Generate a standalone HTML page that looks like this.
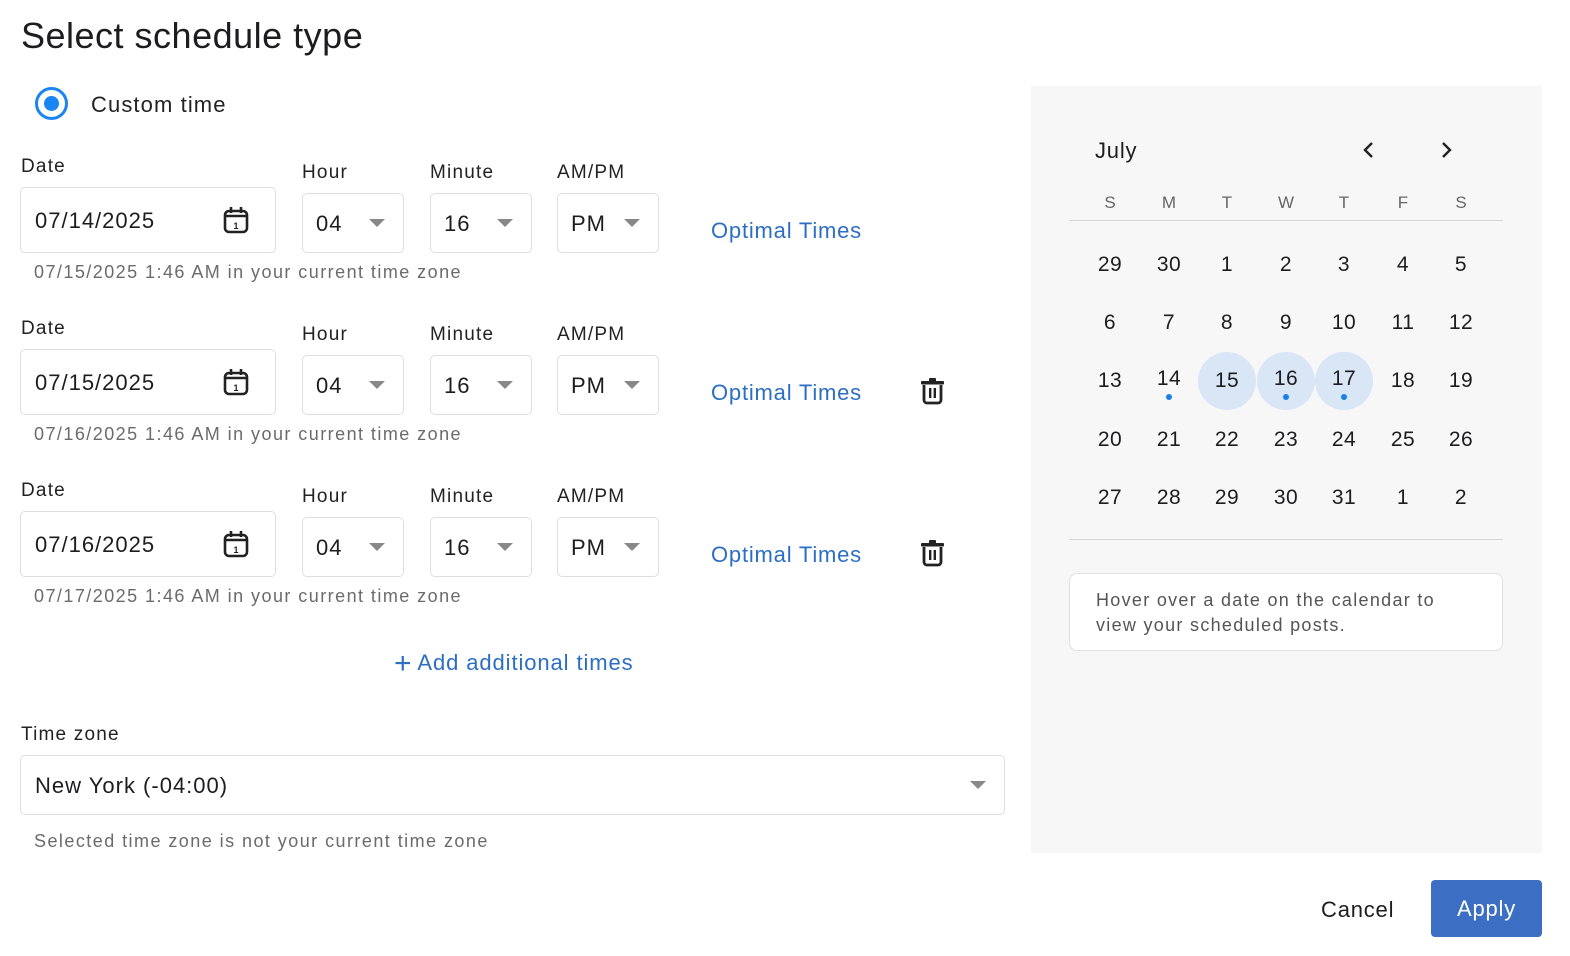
<!DOCTYPE html>
<html><head><style>
*{box-sizing:border-box;margin:0;padding:0}
body{width:1570px;height:956px;background:#fff;font-family:"Liberation Sans",sans-serif;color:#1d1d1f;position:relative;overflow:hidden}
.a{position:absolute}
.lbl{font-size:19px;color:#222;letter-spacing:1.2px}
.box{border:1px solid #dedede;border-radius:5px;background:#fff}
.val{font-size:22px;color:#1d1d1f;letter-spacing:1px}
.help{font-size:18px;color:#6b6b6b;letter-spacing:1.45px}
.opt{font-size:22px;color:#2c6ec2;letter-spacing:.8px}
.caret{width:0;height:0;border-left:8px solid transparent;border-right:8px solid transparent;border-top:8px solid #888}
.cal{position:absolute;left:1031px;top:86px;width:511px;height:767px;background:#f7f7f7}
.d{position:absolute;width:58px;height:58px;margin-left:-29px;margin-top:-29px;text-align:center;line-height:58px;font-size:21px;color:#1d1d1f;border-radius:50%;letter-spacing:.5px}
.hd{position:absolute;width:40px;margin-left:-20px;text-align:center;font-size:17px;color:#666}
.sel{background:#d9e6f5}
.dot{position:absolute;left:26px;top:42px;width:6px;height:6px;border-radius:50%;background:#1a7fe8}
</style></head><body>
<div class="a" style="left:21px;top:15px;font-size:36px;color:#1d1d1f;letter-spacing:.5px">Select schedule type</div>
<div class="a" style="left:35px;top:87px;width:33px;height:33px;border-radius:50%;border:3px solid #1a84f0"></div>
<div class="a" style="left:44px;top:96px;width:15px;height:15px;border-radius:50%;background:#1a84f0"></div>
<div class="a" style="left:91px;top:92px;font-size:22px;color:#222;letter-spacing:1.1px">Custom time</div>

<div id="rows"></div>
<script>
var dates=["07/14/2025","07/15/2025","07/16/2025"],helps=["07/15/2025 1:46 AM in your current time zone","07/16/2025 1:46 AM in your current time zone","07/17/2025 1:46 AM in your current time zone"];
var h="";
for(var i=0;i<3;i++){var o=i*162;
h+='<div class="a lbl" style="left:21px;top:'+(156+o)+'px">Date</div>';
h+='<div class="a box" style="left:20px;top:'+(187+o)+'px;width:256px;height:66px"></div>';
h+='<div class="a val" style="left:35px;top:'+(208+o)+'px">'+dates[i]+'</div>';
h+='<svg class="a" style="left:222px;top:'+(205+o)+'px" width="28" height="30" viewBox="0 0 28 30"><rect x="3" y="6" width="22" height="21" rx="4" fill="none" stroke="#222" stroke-width="2.6"/><line x1="3" y1="11" x2="25" y2="11" stroke="#222" stroke-width="2.6"/><line x1="9" y1="2" x2="9" y2="8" stroke="#222" stroke-width="2.6"/><line x1="19" y1="2" x2="19" y2="8" stroke="#222" stroke-width="2.6"/><text x="14" y="24" font-size="9" font-weight="bold" text-anchor="middle" fill="#222" font-family="Liberation Sans">1</text></svg>';
var xs=[302,430,557],ls=["Hour","Minute","AM/PM"],vs=["04","16","PM"];
for(var j=0;j<3;j++){
h+='<div class="a lbl" style="left:'+xs[j]+'px;top:'+(162+o)+'px">'+ls[j]+'</div>';
h+='<div class="a box" style="left:'+xs[j]+'px;top:'+(193+o)+'px;width:102px;height:60px"></div>';
h+='<div class="a val" style="left:'+(xs[j]+14)+'px;top:'+(211+o)+'px">'+vs[j]+'</div>';
h+='<div class="a caret" style="left:'+(xs[j]+67)+'px;top:'+(219+o)+'px"></div>';}
h+='<div class="a help" style="left:34px;top:'+(262+o)+'px">'+helps[i]+'</div>';
h+='<div class="a opt" style="left:711px;top:'+(218+o)+'px">Optimal Times</div>';
if(i>0)h+='<svg class="a" style="left:920px;top:'+(377+o-162)+'px" width="25" height="28" viewBox="0 0 25 28"><rect x="1" y="4" width="23" height="3.5" rx="1" fill="#222"/><rect x="9" y="1" width="7" height="4" rx="1" fill="#222"/><path d="M4 8 V23 a3 3 0 0 0 3 3 H18 a3 3 0 0 0 3 -3 V8" fill="none" stroke="#222" stroke-width="2.8"/><rect x="9" y="11" width="2.4" height="10" fill="#222"/><rect x="13.6" y="11" width="2.4" height="10" fill="#222"/></svg>';
}
document.getElementById("rows").innerHTML=h;
</script>

<div class="a" style="left:394px;top:650px;font-size:22px;color:#2c6ec2;letter-spacing:.9px"><span style="font-size:30px;line-height:22px;vertical-align:-3px;margin-right:5px">+</span>Add additional times</div>

<div class="a lbl" style="left:21px;top:724px">Time zone</div>
<div class="a box" style="left:20px;top:755px;width:985px;height:60px"></div>
<div class="a val" style="left:35px;top:773px">New York (-04:00)</div>
<div class="a caret" style="left:970px;top:781px"></div>
<div class="a help" style="left:34px;top:831px">Selected time zone is not your current time zone</div>

<div class="cal" id="cal"></div>
<script>
var c='<div class="a" style="left:64px;top:52px;font-size:22px;color:#1d1d1f;letter-spacing:.8px">July</div>';
c+='<svg class="a" style="left:331px;top:55px" width="14" height="18"><path d="M10 2 L3 9 L10 16" fill="none" stroke="#222" stroke-width="2.4"/></svg>';
c+='<svg class="a" style="left:408px;top:55px" width="14" height="18"><path d="M4 2 L11 9 L4 16" fill="none" stroke="#222" stroke-width="2.4"/></svg>';
var cx=[79,138,196,255,313,372,430],hd="SMTWTFS";
for(var k=0;k<7;k++)c+='<div class="hd" style="left:'+cx[k]+'px;top:107px">'+hd[k]+'</div>';
c+='<div class="a" style="left:38px;top:134px;width:434px;height:1px;background:#d6d6d6"></div>';
var days=[29,30,1,2,3,4,5,6,7,8,9,10,11,12,13,14,15,16,17,18,19,20,21,22,23,24,25,26,27,28,29,30,31,1,2];
var ry=[179,237,295,354,412];
for(var n=0;n<35;n++){var r=Math.floor(n/7),col=n%7,dd=days[n];
var s=(r==2&&col>=2&&col<=4)?' sel':'';var dot=(r==2&&(col==1||col==3||col==4));
c+='<div class="d'+s+'" style="left:'+cx[col]+'px;top:'+ry[r]+'px'+(dot?';line-height:54px':'')+'">'+dd+(dot?'<div class="dot"></div>':'')+'</div>';}
c+='<div class="a" style="left:38px;top:453px;width:434px;height:1px;background:#d6d6d6"></div>';
c+='<div class="a" style="left:38px;top:487px;width:434px;height:78px;background:#fff;border:1px solid #e0e0e0;border-radius:8px;padding:14px 26px;font-size:18px;line-height:25px;color:#555;letter-spacing:1.3px">Hover over a date on the calendar to view your scheduled posts.</div>';
document.getElementById("cal").innerHTML=c;
</script>

<div class="a" style="left:1321px;top:897px;font-size:22px;color:#1d1d1f;letter-spacing:.8px">Cancel</div>
<div class="a" style="left:1431px;top:880px;width:111px;height:57px;background:#3c6ec4;border-radius:4px;color:#fff;font-size:22px;text-align:center;line-height:57px;letter-spacing:.8px">Apply</div>
</body></html>
